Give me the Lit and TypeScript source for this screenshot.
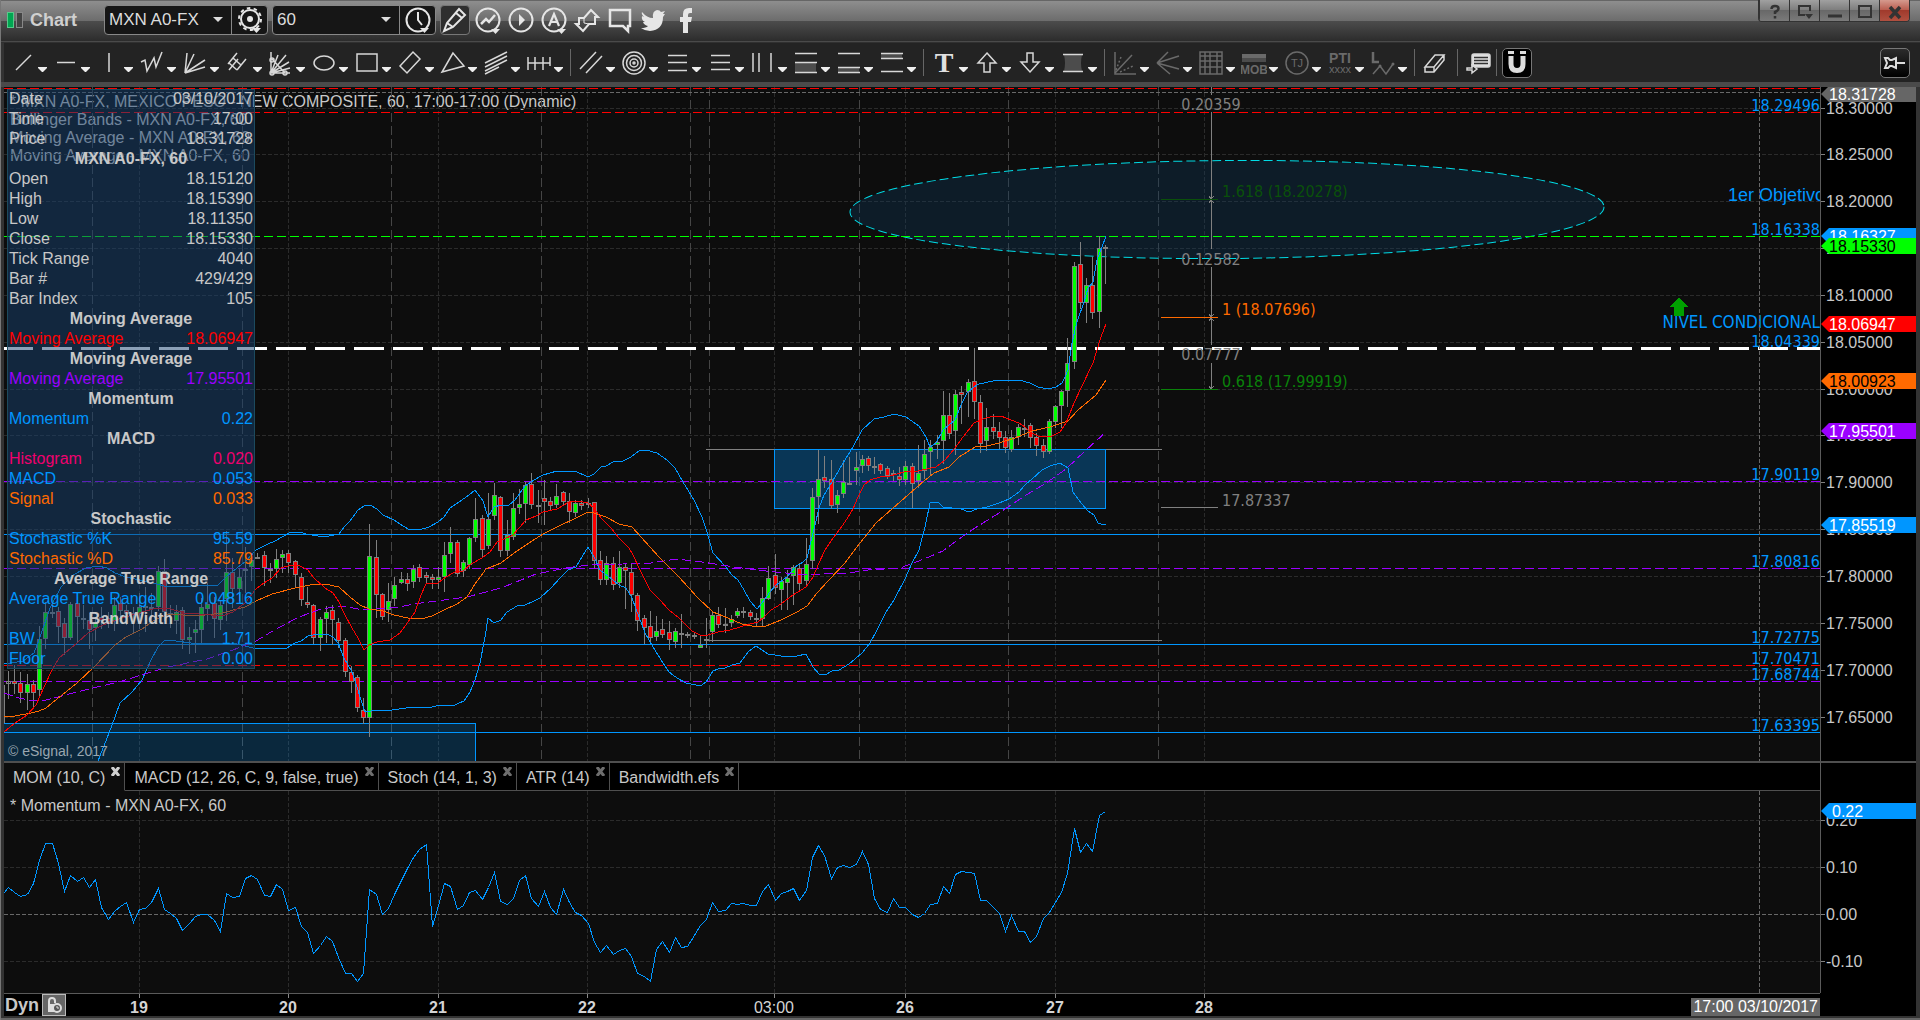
import { LitElement, html, svg, css } from "lit";
import { customElement, state } from "lit/decorators.js";
import { classMap } from "lit/directives/class-map.js";
import { styleMap } from "lit/directives/style-map.js";

type Pt = [number, number];

/* Drawing units: one pixel; the price pane starts at PANE_X / PANE_Y, the study pane at STUDY_Y. */
const PANE_X = 4;
const PANE_Y = 87;
const STUDY_Y = 791;
const BAR_X = 8;
const BAR_STEP = 6.232;

const barX = (i: number) => Math.round(BAR_X + i * BAR_STEP);
const priceY = (p: number) => Math.floor(21 + (18.3 - p) * 937) + 0.5;

/* high, body top, body bottom, low, g = up / r = down / d = unchanged */
const BARS = `
671 681 683 698 d|665 681 683 693 r|672 683 692 702 r|674 684 692 709 g|680 684 692 706 r|626 639 689 696 g|602 612 638 648 g|603 612 612 617 d
607 611 626 642 r|618 623 637 654 r|602 604 637 639 g|597 603 616 641 r|605 618 618 628 d|613 620 629 648 r|617 622 627 640 g|607 617 620 628 r
612 618 621 627 r|597 605 620 630 g|597 603 610 620 r|605 610 613 624 r|607 613 613 633 d|593 607 613 628 g|587 606 606 631 d|593 607 607 620 d
566 571 606 610 g|559 571 611 620 r|605 613 613 627 d|605 612 620 633 g|607 610 639 648 r|627 637 639 653 g|620 629 632 652 g|598 607 629 643 g
583 604 608 620 g|597 603 618 637 r|600 605 619 629 g|531 572 598 620 g|558 572 588 607 r|568 577 588 600 g|547 569 569 592 d|553 560 566 580 g
553 557 557 558 d|551 555 567 585 r|563 569 569 582 d|549 559 568 577 g|550 554 557 572 g|550 553 562 572 r|560 561 574 587 r|573 577 599 605 r
587 602 604 607 r|604 605 637 643 r|617 619 637 650 g|606 612 618 642 g|605 610 619 644 r|618 622 640 647 r|638 640 671 676 r|666 672 681 692 r
675 677 707 711 r|698 710 717 723 r|524 556 717 736 g|540 557 594 617 r|593 594 616 619 r|583 601 609 621 g|577 585 598 605 g|572 579 582 583 g
573 579 583 590 r|565 569 581 587 g|564 567 577 581 r|572 575 577 582 r|574 577 579 588 r|567 577 579 588 g|542 555 576 591 g|527 542 553 562 g
540 542 573 576 r|560 562 570 576 g|537 538 564 568 g|498 519 537 541 g|515 518 549 557 r|493 519 545 548 g|483 495 515 519 g|496 497 550 556 r
520 535 550 555 g|493 508 536 539 g|489 504 507 513 g|482 485 503 522 g|473 484 504 508 r|490 505 505 522 d|480 498 501 524 r|497 501 505 509 r
484 496 504 507 g|491 492 501 504 r|493 501 511 522 r|500 503 512 516 g|500 503 505 509 r|498 503 503 507 d|502 502 560 567 r|551 560 579 584 r
556 563 579 584 g|557 563 584 589 r|551 567 582 587 g|563 567 570 608 r|563 572 594 611 r|593 595 620 630 r|615 618 627 643 r|611 626 637 641 r
616 631 636 640 g|619 629 634 637 r|621 632 639 649 r|628 631 641 647 g|614 633 633 647 d|632 634 634 637 d|632 635 635 638 d|635 645 647 647 g
618 639 639 647 d|612 615 631 641 g|607 615 624 627 r|608 624 624 632 d|615 619 622 626 g|608 611 615 617 g|607 611 611 617 d|610 612 616 619 r
613 618 618 626 d|587 598 618 625 g|566 578 598 599 g|554 575 587 593 r|577 581 589 609 g|570 578 582 609 g|565 567 575 604 g|563 568 583 591 r
538 564 580 584 g|488 497 560 568 g|450 479 496 523 g|456 477 480 487 r|460 479 505 508 r|490 495 504 512 g|460 482 493 497 g|457 483 483 484 d
452 467 470 484 g|455 459 465 472 g|456 458 465 470 r|457 466 466 473 d|463 464 470 473 r|466 468 475 478 r|470 473 473 480 d|467 476 479 485 r
461 466 479 484 g|463 466 483 507 r|445 473 480 487 g|440 454 470 478 g|440 447 451 474 g|435 442 444 458 g|391 415 440 463 g|393 415 433 438 r
390 394 430 454 g|386 392 394 423 r|379 382 391 416 g|348 381 401 418 r|395 402 443 452 r|408 427 440 450 g|414 427 431 438 r|422 431 437 448 r
431 437 447 452 r|430 437 449 451 g|424 427 436 444 g|419 428 428 436 d|423 425 437 447 r|433 437 445 455 r|439 445 451 457 r|419 421 451 453 g
405 406 421 427 g|390 391 405 427 g|338 363 390 406 g|262 266 361 368 g|242 264 302 308 r|278 285 302 322 g|257 285 312 318 r|236 248 311 327 g|245 247 247 283 d`
  .trim()
  .split(/[|\n]/)
  .map((s) => s.trim().split(" "));

const BAND_UPPER = "4,664 23,661 34,653 39,640 50,608 61,587 73,575 86,568 98,566 107,568 115,573 126,577 153,583 168,587 191,586 218,585 226,577 237,568 245,562 256,550 268,544 275,541 289,533 300,532 306,534 318,536 329,536 339,534 344,527 350,521 358,510 364,506 370,505 377,509 383,515 394,520 400,524 408,529 419,530 429,527 438,522 444,517 450,508 459,502 469,495 475,490 483,501 488,517 494,507 501,505 509,505 515,500 525,486 534,480 543,475 557,471 575,471 588,477 594,474 601,467 606,466 613,462 623,461 631,457 639,451 646,450 657,453 667,460 675,468 683,482 694,500 702,517 707,532 713,553 726,567 732,575 738,580 744,590 750,601 757,609 762,603 770,592 775,586 787,577 795,567 803,562 807,558 812,537 815,525 819,508 824,495 829,487 835,477 843,463 853,447 862,430 874,419 884,417 894,414 906,417 919,426 926,437 930,447 936,443 943,430 955,420 961,405 967,393 974,387 979,384 993,381 1019,380 1030,383 1038,387 1048,389 1056,387 1062,383 1065,377 1068,370 1072,343 1077,322 1084,302 1088,288 1093,282 1097,260 1102,247 1106,236";
const BAND_LOWER = "98,761 109,733 115,717 120,703 132,692 142,680 151,660 158,647 165,640 176,641 191,643 220,643 237,644 253,648 276,648 287,648 295,643 301,641 308,636 318,634 327,634 333,637 338,643 344,658 352,672 357,687 362,703 365,712 377,710 392,710 413,707 432,707 440,705 453,706 459,703 464,701 470,692 475,680 480,663 485,637 488,618 494,623 501,620 507,612 517,606 525,605 534,601 540,598 551,588 560,578 568,570 576,567 582,557 588,547 594,557 600,570 613,580 619,585 626,588 632,598 639,617 645,633 653,647 663,663 669,672 677,678 686,683 696,685 702,685 706,682 713,671 718,669 725,668 732,665 740,663 749,651 756,646 762,650 768,654 775,655 781,656 797,656 806,654 813,667 819,674 825,675 832,671 839,670 849,664 862,653 870,643 876,632 886,612 894,600 905,579 912,563 919,550 925,527 930,503 938,502 943,507 961,509 969,512 977,509 987,507 999,503 1009,499 1019,492 1025,485 1032,479 1042,470 1050,466 1060,463 1068,468 1073,492 1081,503 1088,511 1094,515 1098,523 1101,524 1106,524";
const MA_FAST = "4,732 15,723 27,715 36,705 44,687 52,670 59,658 77,643 88,633 103,625 122,618 142,612 157,608 168,608 184,613 199,614 222,616 233,612 245,603 256,589 264,583 272,578 281,568 291,565 300,566 308,570 314,578 325,588 333,593 339,602 344,613 352,628 358,638 364,650 369,645 377,642 390,640 400,633 408,622 415,612 421,595 426,584 438,583 446,577 455,572 463,571 471,564 482,558 490,552 497,542 513,535 519,528 526,520 536,516 543,512 557,509 569,502 578,501 588,503 594,508 601,518 611,528 619,538 629,548 633,555 641,572 650,590 659,599 669,610 679,618 692,631 700,635 708,635 718,632 730,630 740,627 750,624 758,622 764,617 771,610 781,604 793,595 806,587 813,577 819,563 825,550 831,541 845,522 853,509 858,497 864,485 870,480 880,477 890,476 904,472 918,471 936,467 945,460 955,448 963,437 974,423 983,419 993,416 1001,416 1011,420 1019,423 1025,427 1030,432 1038,436 1050,437 1060,432 1066,423 1070,413 1074,403 1081,388 1093,363 1101,337 1106,324";
const MA_SLOW = "4,716 15,716 31,713 39,711 46,708 57,699 77,683 94,667 115,645 126,637 142,629 153,621 168,614 197,616 222,613 245,607 256,601 272,594 295,588 310,585 325,584 339,587 350,597 360,605 369,609 383,611 394,615 408,618 421,619 432,616 444,610 457,604 467,597 475,584 486,569 501,563 517,551 532,541 543,534 559,526 574,519 588,512 594,513 606,517 619,524 632,527 641,537 659,557 679,577 698,598 713,612 728,618 742,624 757,627 766,626 781,620 797,612 807,606 817,593 829,580 845,563 860,543 876,523 892,509 908,495 924,481 934,473 949,467 959,457 975,447 987,446 999,443 1015,438 1032,431 1050,427 1068,421 1078,410 1096,395 1106,380";
const MA_LONG = "4,693 19,698 34,701 46,700 77,692 122,681 168,667 207,659 233,650 256,641 276,629 299,617 321,609 341,606 364,610 398,607 421,603 467,597 501,588 536,574 566,568 588,565 623,564 651,563 677,559 702,562 734,567 766,571 805,575 821,574 849,573 868,570 900,568 924,559 943,551 959,539 975,528 999,513 1023,497 1046,483 1066,469 1086,450 1106,432";

const MOMENTUM = [
  887, 892, 896, 894, 883, 860, 843, 843, 863, 891, 875, 881, 877, 887, 879, 907, 919, 911, 906, 902, 922, 909, 908, 902, 888, 909, 913, 918, 930, 923,
  916, 914, 914, 920, 931, 893, 897, 896, 878, 875, 879, 895, 896, 884, 889, 910, 907, 926, 932, 953, 945, 936, 941, 957, 973, 973, 981, 973, 889, 894,
  914, 908, 894, 880, 868, 857, 849, 844, 926, 905, 883, 886, 909, 905, 892, 890, 899, 887, 872, 901, 904, 898, 880, 875, 898, 906, 891, 907, 914, 889,
  902, 912, 915, 923, 942, 952, 945, 954, 950, 948, 956, 973, 976, 981, 949, 941, 952, 937, 947, 946, 935, 925, 919, 902, 911, 910, 903, 904, 903, 905,
  905, 891, 884, 900, 893, 891, 888, 900, 890, 857, 845, 855, 878, 867, 865, 867, 864, 851, 864, 898, 909, 912, 898, 907, 907, 914, 917, 913, 904, 903,
  886, 893, 874, 871, 872, 873, 900, 900, 907, 913, 931, 915, 931, 931, 942, 936, 918, 912, 902, 892, 873, 828, 852, 843, 851, 815, 811,
];

const GRID_X = [139, 288, 438, 587, 774, 905, 1055, 1204];
const SESSION_X = [92, 242, 391, 541, 690, 709, 859, 1008, 1158];
const PRICES = [18.3, 18.25, 18.2, 18.15, 18.1, 18.05, 18, 17.95, 17.9, 17.85, 17.8, 17.75, 17.7, 17.65];

const LEVELS: { price: number; cls: string; label: boolean }[] = [
  { price: 18.3213, cls: "red", label: false },
  { price: 18.29496, cls: "red", label: true },
  { price: 18.16338, cls: "lime", label: true },
  { price: 18.04339, cls: "bold", label: true },
  { price: 17.90119, cls: "violet", label: true },
  { price: 17.8453, cls: "solid", label: false },
  { price: 17.80816, cls: "violet", label: true },
  { price: 17.72775, cls: "solid", label: true },
  { price: 17.70471, cls: "red", label: true },
  { price: 17.68744, cls: "violet", label: true },
  { price: 17.63395, cls: "solid", label: true },
];

const FLAGS: [number, string, string, string][] = [
  [7, "18.31728", "#666666", "#ffffff"],
  [149, "18.16327", "#0096ff", "#ffffff"],
  [159, "18.15330", "#00ff00", "#000000"],
  [237, "18.06947", "#ff0000", "#ffffff"],
  [294, "18.00923", "#ff6a00", "#000000"],
  [344, "17.95501", "#9b00ff", "#ffffff"],
  [438, "17.85519", "#0096ff", "#ffffff"],
];

const CURSOR_ROWS: [string, string?, string?][] = [
  ["Date", "03/10/2017"], ["Time", "17:00"], ["Price", "18.31728"],
  ["MXN A0-FX, 60"],
  ["Open", "18.15120"], ["High", "18.15390"], ["Low", "18.11350"], ["Close", "18.15330"],
  ["Tick Range", "4040"], ["Bar #", "429/429"], ["Bar Index", "105"],
  ["Moving Average"], ["Moving Average", "18.06947", "red"],
  ["Moving Average"], ["Moving Average", "17.95501", "violet"],
  ["Momentum"], ["Momentum", "0.22", "blue"],
  ["MACD"], ["Histogram", "0.020", "pink"], ["MACD", "0.053", "blue"], ["Signal", "0.033", "orange"],
  ["Stochastic"], ["Stochastic %K", "95.59", "blue"], ["Stochastic %D", "85.79", "orange"],
  ["Average True Range"], ["Average True Range", "0.04816", "blue"],
  ["BandWidth"], ["BW", "1.71", "blue"], ["Floor", "0.00", "blue"],
];

const STUDIES = ["MOM (10, C)", "MACD (12, 26, C, 9, false, true)", "Stoch (14, 1, 3)", "ATR (14)", "Bandwidth.efs"];

/* Drawing tools: label, glyph in a 26 × 26 box, dimmed when unavailable. */
type Tool = { name: string; art: unknown; dim?: boolean };
const TOOLS: Tool[][] = [
  [
    { name: "Trend line", art: svg`<path d="M6 20 L21 5"/>` },
    { name: "Horizontal line", art: svg`<path d="M4 12.500H22"/>` },
    { name: "Vertical line", art: svg`<path d="M13 3V22"/>` },
    { name: "Free line", art: svg`<path d="M2 12L6 10L8 21L15 8L17 17L23 2"/>` },
    { name: "Gann fan", art: svg`<path d="M3 23L5 3M3 23L12 4M3 23L23 10M3 23L23 17"/>` },
    { name: "Pitchfork", art: svg`<path d="M4 20L13 9M3 14L12 3M12 20L21 9M4 13L12 20M8 8L16 15"/>` },
    { name: "Speed lines", art: svg`<path d="M3 2V23H22M3 23L10 5M3 23L18 5M3 23L21 12M3 23L22 18M4 9L17 23"/><circle cx="4" cy="10" r="2"/><circle cx="4" cy="23" r="2"/><circle cx="17" cy="23" r="2"/>` },
    { name: "Ellipse", art: svg`<ellipse cx="13" cy="13" rx="10" ry="7"/>` },
    { name: "Rectangle", art: svg`<rect x="3" y="4" width="20" height="17"/>` },
    { name: "Parallelogram", art: svg`<path d="M3 16L16 2L23 9L10 23Z"/>` },
    { name: "Triangle", art: svg`<path d="M13 3L2 22L24 16Z"/>` },
    { name: "Regression", art: svg`<path d="M2 13L24 2M2 17L24 6M2 21L24 10M2 24L16 17"/>` },
    { name: "Cycle lines", art: svg`<path d="M2 13H24M2 7V20M9 7V20M17 7V20M24 7V16"/>` },
  ],
  [
    { name: "Channel", art: svg`<path d="M2 19L18 2M8 23L24 6"/>` },
    { name: "Fibonacci circle", art: svg`<circle cx="13" cy="13" r="11"/><circle cx="13" cy="13" r="7.500"/><circle cx="13" cy="13" r="4"/><circle cx="13" cy="13" r="1"/>` },
    { name: "Fibonacci retracement", art: svg`<path d="M4 5.500H23M4 12.500H23M4 20.500H23"/>` },
    { name: "Fibonacci extension", art: svg`<path d="M4 5.500H23M4 12.500H23M4 19.500H23"/>` },
    { name: "Fibonacci time", art: svg`<path d="M3 3V22M9 3V22M21 3V22"/>` },
    { name: "Fibonacci zone A", art: svg`<rect x="2" y="13" width="21" height="9" class="wash"/><path d="M2 3.500H24M2 12.500H24M2 22.500H24"/>` },
    { name: "Fibonacci zone B", art: svg`<rect x="2" y="17" width="21" height="5" class="wash"/><path d="M2 3.500H24M2 17.500H24M2 22.500H24"/>` },
    { name: "Fibonacci zone C", art: svg`<rect x="2" y="3" width="21" height="5" class="wash"/><path d="M2 3.500H24M2 8.500H24M2 21.500H24"/>` },
  ],
  [
    { name: "Text", art: svg`<text x="13" y="22" class="serif">T</text>` },
    { name: "Arrow up", art: svg`<path d="M13 3L22 13H16V22H10V13H4Z"/>` },
    { name: "Arrow down", art: svg`<path d="M13 22L22 12H16V3H10V12H4Z"/>` },
    { name: "Highlight", art: svg`<path class="wash" d="M4 5H22Q20 13 22 21H4Q6 13 4 5"/><path d="M3 4.500H23M3 21.500H23"/>` },
  ],
  [
    { name: "Gann angles", dim: true, art: svg`<path d="M3 2V24H24"/><path d="M3 23L20 5"/><path stroke-dasharray="2 2" d="M4 20L9 7M8 22L21 16"/>` },
    { name: "Andrews fan", dim: true, art: svg`<path d="M2 13L13 2M2 13L24 6M2 13L24 19M2 13L15 24"/>` },
    { name: "Grid", dim: true, art: svg`<rect x="2" y="2" width="22" height="22"/><path d="M7 2V24M12 2V24M19 2V24M2 6H24M2 11H24M2 17H24"/>` },
    { name: "Make or break", dim: true, art: svg`<rect x="1" y="4" width="24" height="4" class="fill"/><rect x="1" y="8" width="24" height="4" class="wash"/><text x="13" y="24" class="strong">MOB</text>` },
    { name: "Trade judge", dim: true, art: svg`<circle cx="13" cy="13" r="11"/><text x="13" y="17">TJ</text>` },
    { name: "Profit taking index", dim: true, art: svg`<text x="13" y="13" class="tall">PTI</text><text x="13" y="23">xxxx</text>` },
    { name: "Elliott labels", dim: true, art: svg`<path d="M3 2V12H9" stroke-width="2.500"/><path d="M3 24L10 16L16 24L23 14"/><circle cx="10" cy="16" r="1.500"/><circle cx="23" cy="14" r="1.500"/>` },
  ],
];

const QUICK = [
  { name: "Studies", art: svg`<circle cx="14" cy="14" r="11.500"/><path d="M7 18L12 13L15 16L21 9" stroke-width="2.500"/><path class="fill" d="M17 23h9l-4.500 5z"/>` },
  { name: "Replay", art: svg`<circle cx="14" cy="14" r="11.500"/><path class="fill" d="M12 8L18 14L12 20Z"/>` },
  { name: "Alerts", art: svg`<circle cx="14" cy="14" r="11.500"/><path d="M9 20L14 8L19 20M11 16H17" stroke-width="2.200"/><path class="fill" d="M17 23h9l-4.500 5z"/>` },
  { name: "Trade", art: svg`<path d="M18 4L25 11H22V18H16L10 25L3 18H6V12H11Z" /><path d="M11 12V17L16 18" stroke-width="1"/>` },
  { name: "Comments", art: svg`<path d="M4 4H24V20H22V25L17 20H4Z" stroke-width="2.500"/>` },
  { name: "Twitter", art: svg`<path class="fill" d="M3 6Q8 12 14 12Q13 5 18 4Q21 4 22 6L26 5L24 8L26 8L24 11Q24 24 11 25Q6 25 2 22Q7 22 9 20Q5 19 4 16L6 16Q2 14 3 10L5 11Q2 8 3 6"/>` },
  { name: "Facebook", art: svg`<path class="fill" d="M11 27V16H8V11H11V8Q11 2 17 2H20V7H18Q16 7 16 9V11H20L19 16H16V27Z"/>` },
];

@customElement("app-root")
export class AppRoot extends LitElement {
  @state() private study = 0;
  @state() private magnet = true;

  static styles = css`
    :host { display: block; font: 16px/20px "Liberation Sans", Arial, sans-serif; color: #c8c8c8; }
    * { box-sizing: border-box; }
    button, select { font: inherit; color: inherit; background: none; border: 0; padding: 0; margin: 0; }
    svg { display: block; }
    .frame { min-height: 100vh; display: flex; flex-direction: column; background: #333; border-left: 1px solid #777; }
    .title { height: 43px; flex: none; display: flex; align-items: flex-start; justify-content: space-between;
      background: linear-gradient(#666 0 1px, #8e8e8e 1px, #6c6c6c 21px, #4c4c4c 21px, #2c2c2c 41px, #4a4a4a 41px 42px, #303030 42px); }
    .bar { display: flex; align-items: center; padding: 5px 0 0 6px; }
    .logo { display: flex; gap: 2px; }
    .logo i { width: 7px; height: 16px; border: 1px solid #888; background: #444; }
    .logo i.up { background: #00a651; border-color: #58c98a; }
    h1 { font-size: 18px; line-height: 30px; margin: 0 27px 0 7px; color: #d0d0d0; }
    .combo { display: flex; align-items: center; height: 30px; background: #161616; border: 1px solid #888; border-radius: 4px; margin-right: 4px; }
    .pick { position: relative; display: flex; align-items: center; height: 28px; }
    .pick select { appearance: none; width: 126px; height: 28px; padding: 0 4px; font-size: 17px; color: #dcdcdc; outline: none; }
    .pick::after { content: ""; position: absolute; right: 8px; top: 11px; border: 5px solid transparent; border-top-color: #ddd; pointer-events: none; }
    .combo > button { width: 36px; height: 28px; border-left: 1px solid #888; display: flex; align-items: center; justify-content: center; }
    .art { fill: none; stroke: #e6e6e6; stroke-width: 2; }
    .art .fill { fill: #e6e6e6; stroke: none; }
    .pencil { width: 30px; height: 30px; background: #2e2e2e; border: 1px solid #777; border-radius: 4px; }
    .quick { display: flex; gap: 5px; margin-left: 4px; }
    .quick button { width: 28px; height: 28px; }
    .window { display: flex; margin-right: 10px; border: 1px solid #333; border-top: 0; border-radius: 0 0 4px 4px; overflow: hidden; }
    .window button { width: 30px; height: 21px; border-left: 1px solid #333; background: linear-gradient(#a0a0a0, #7c7c7c 50%, #686868 50%, #7a7a7a); }
    .window button:last-child { background: linear-gradient(#d59a8e, #b8594b 50%, #a03a2c 50%, #b05040); }
    .window svg { margin: 0 auto; fill: none; stroke: #333; stroke-width: 2; }
    .tools { height: 39px; flex: none; display: flex; align-items: center; background: #232323; padding: 0 10px 0 4px; margin: 0 0 0 3px; }
    .tool { width: 43px; height: 32px; display: flex; align-items: center; }
    .tool svg { flex: none; }
    .glyph { fill: none; stroke: #d8d8d8; stroke-width: 1.5; margin: 0 2px; }
    .glyph .wash { fill: #4c4c4c; stroke: none; }
    .glyph text { fill: #e0e0e0; stroke: none; font-size: 11px; text-anchor: middle; }
    .glyph text.serif { font: bold 28px "Liberation Serif", serif; }
    .glyph text.strong { font-size: 12px; font-weight: bold; }
    .glyph text.tall { font-size: 14px; font-weight: bold; }
    .dim .glyph { stroke: #6a6a6a; }
    .dim .glyph text, .dim .glyph .fill, .dim .glyph circle[r="1.500"] { fill: #6a6a6a; stroke: none; }
    .caret { fill: #eee; margin-top: 14px; }
    .rule { width: 1px; height: 27px; background: #666; margin: 0 5px 0 3px; }
    .lone { width: 34px; height: 30px; }
    .mid { width: 30px; height: 30px; }
    .boxed { width: 30px; height: 30px; background: #000; border: 1px solid #777; border-radius: 5px; }
    .push { margin-left: auto; background: linear-gradient(#2c2c2c, #000); }
    .strip { height: 5px; flex: none; background: #4a4a4a; }
    .work { flex: 1; display: grid; grid-template-columns: minmax(0, 1fr) 96px; grid-template-rows: minmax(400px, 1fr) 30px 202px 23px;
      margin: 0 4px 0 3px; background: #000; }
    .pane { position: relative; background: #0d0d0d; overflow: hidden; }
    .pane > svg, .axis > svg { position: absolute; inset: 0; width: 100%; height: 100%; }
    .axis { position: relative; border-left: 1px solid #5a5a5a; overflow: hidden; }
    .chart { shape-rendering: crispEdges; fill: none; }
    .chart text, .axis text { stroke: none; fill: #c8c8c8; }
    .chart .tah { font: 16px/18px "DejaVu Sans Condensed", "DejaVu Sans", sans-serif; }
    .chart .lv { fill: #0096ff; text-anchor: end; }
    .chart .note { fill: #0096ff; font-size: 18px; }
    .chart .tah.note { font-size: 17px; }
    .grid { stroke: #2b2b2b; stroke-dasharray: 4 2; }
    .session { stroke: #454545; stroke-dasharray: 9 4; }
    .cross { stroke: #686868; stroke-dasharray: 4 2; }
    .level { stroke: #0096ff; }
    .level.red { stroke: #f00; stroke-dasharray: 9 4; }
    .level.lime { stroke: #0f0; stroke-dasharray: 9 4; }
    .level.violet { stroke: #9b00ff; stroke-dasharray: 9 4; }
    .level.bold { stroke: #fff; stroke-width: 3; stroke-dasharray: 30 9; stroke-dashoffset: 1; }
    .zone { fill: #0096ff; fill-opacity: .3; stroke: #0096ff; }
    .zone.soft { fill-opacity: .2; }
    .band { stroke: #0096ff; }
    .fast { stroke: #f00; }
    .slow { stroke: #ff6a00; }
    .long { stroke: #9b00ff; stroke-dasharray: 9 4; }
    .wick { stroke: #808080; }
    .body { stroke: #808080; }
    .body.g { fill: #0f0; }
    .body.r { fill: #f00; }
    .oval { fill: #0f3a5c; fill-opacity: .35; stroke: #00dce6; stroke-dasharray: 9 4; shape-rendering: auto; }
    .gray { stroke: #808080; }
    .chart text.mute { fill: #808080; text-anchor: middle; }
    .legend { position: absolute; left: 6px; top: 6px; margin: 0; padding: 0; list-style: none; line-height: 18px; white-space: nowrap; }
    .credit { position: absolute; left: 4px; bottom: 0; font-size: 14px; color: #9aa7b0; margin: 0; }
    .cursor { position: absolute; left: 3px; top: 2px; width: 248px; border-collapse: collapse; background: rgba(24, 66, 112, .5); box-shadow: inset 0 0 0 1px #1c4a5e; }
    .cursor th, .cursor td { height: 20px; padding: 0 2px; line-height: 20px; text-align: left; font-weight: normal; white-space: nowrap; }
    .cursor td { text-align: right; }
    .cursor .head th { font-weight: bold; text-align: center; }
    .cursor .red { color: #f00; }
    .cursor .violet { color: #9b00ff; }
    .cursor .blue { color: #0096ff; }
    .cursor .pink { color: #f0006e; }
    .cursor .orange { color: #ff6a00; }
    .tabs { display: flex; border-top: 2px solid #4f4f4f; }
    .tab { display: flex; align-items: center; gap: 6px; padding: 0 4px 0 9px; border: solid #4f4f4f; border-width: 0 1px 1px 0; white-space: nowrap; }
    .tab button { padding-top: 2px; }
    .tab.on { background: #0d0d0d; border-bottom-color: #0d0d0d; }
    .tab .x { align-self: flex-start; width: 9px; height: 11px; margin-top: 2px; }
    .tab .x svg { stroke: #6e6e6e; stroke-width: 3; }
    .tab.on .x svg { stroke: #d0d0d0; }
    .rest { flex: 1; border-bottom: 1px solid #4f4f4f; }
    .gap { border-top: 2px solid #4f4f4f; border-left: 1px solid #5a5a5a; }
    .time { position: relative; display: flex; align-items: center; border-top: 1px solid #5a5a5a; }
    .time svg.scale { position: absolute; inset: 0; width: 100%; height: 100%; fill: #d4d4d4; text-anchor: middle; }
    .dyn { font-size: 18px; font-weight: bold; padding: 0 3px 0 1px; }
    .lock { width: 24px; height: 22px; background: #666; border: 1px solid #bbb; }
    .stamp { position: relative; margin: 4px 0 0 auto; padding: 0 2px; line-height: 18px; background: #666; color: #fff; }
    .foot { height: 4px; flex: none; border-bottom: 2px solid #666; }
  `;

  private hline(y: number, cls: string) {
    return svg`<line class=${cls} x1="0" x2="100%" y1=${y} y2=${y}></line>`;
  }

  private vline(x: number, cls: string, y1 = "0", y2 = "100%") {
    return svg`<line class=${cls} x1=${x + 0.5 - PANE_X} x2=${x + 0.5 - PANE_X} y1=${y1} y2=${y2}></line>`;
  }

  private candle(bar: string[], i: number) {
    const [h, t, b, l] = bar.map(Number);
    const x = barX(i);
    return svg`<line class="wick" x1=${x + 0.5} x2=${x + 0.5} y1=${h} y2=${l + 1}></line>
      <rect class="body ${bar[4]}" x=${x - 1.5} y=${t + 0.5} width="4" height=${Math.max(b - t, 1)}></rect>`;
  }

  private fib(y: number, color: string, text: string) {
    return svg`<line x1="1161" x2="1218" y1=${y + 0.5} y2=${y + 0.5} stroke=${color}></line>
      <text class="tah" x="1222" y=${y - 2} style=${styleMap({ fill: color })}>${text}</text>`;
  }

  private pricePane() {
    const spans: Pt[] = [[87, 95], [112, 249], [267, 345], [363, 389]];
    return svg`
      ${GRID_X.map((x) => this.vline(x, "grid"))}
      ${PRICES.map((p) => this.hline(priceY(p), "grid"))}
      ${SESSION_X.map((x) => this.vline(x, "session"))}
      <g transform="translate(${-PANE_X} ${-PANE_Y})">
        <rect class="zone soft" x="3.5" y="723.5" width="472" height="900"></rect>
        <rect class="zone" x="774.5" y="449.5" width="331" height="59"></rect>
        <ellipse class="oval" cx="1227" cy="209.5" rx="377" ry="49" transform="rotate(-0.4 1227 209.5)"></ellipse>
        <path class="gray" d="M706 449.500H774M1106 449.500H1162M706 640.500H1162M1161 507.500H1218M4.500 685V723"/>
      </g>
      ${LEVELS.map((l) => this.hline(priceY(l.price), "level " + l.cls))}
      <g transform="translate(${-PANE_X} ${-PANE_Y})">
        ${BARS.map((b, i) => this.candle(b, i))}
        <polyline class="band" points=${BAND_UPPER}></polyline>
        <polyline class="band" points=${BAND_LOWER}></polyline>
        <polyline class="long" points=${MA_LONG}></polyline>
        <polyline class="slow" points=${MA_SLOW}></polyline>
        <polyline class="fast" points=${MA_FAST}></polyline>
        ${spans.map(([a, b]) => svg`<line class="gray" x1="1211.5" x2="1211.5" y1=${a} y2=${b}></line>`)}
        <path class="gray" d="M1209 196L1211 199L1214 196M1209 203L1211 200L1214 203M1209 314L1211 317L1214 314M1209 321L1211 318L1214 321M1209 386L1211 389L1214 386"/>
        <text class="tah mute" x="1211" y="110">0.20359</text>
        <text class="tah mute" x="1211" y="265">0.12582</text>
        <text class="tah mute" x="1211" y="360">0.07777</text>
        ${this.fib(199, "#0a500a", "1.618 (18.20278)")}
        ${this.fib(317, "#ff6a00", "1 (18.07696)")}
        ${this.fib(389, "#0a820a", "0.618 (17.99919)")}
        <text class="tah" x="1222" y="506" style="fill:#808080">17.87337</text>
      </g>
      ${LEVELS.filter((l) => l.label).map((l) => svg`<text class="tah lv" x="100%" y=${priceY(l.price) - 1.5}>${l.price.toFixed(5)}</text>`)}
      <text class="tah lv note" x="100%" y="241">NIVEL CONDICIONAL</text>
      ${this.hline(5.5, "cross")}
      <svg x="100%" overflow="visible">
        <text class="note" x="-92" y="114">1er Objetivo</text>
        <path d="M-141 211L-151 220H-146V229H-136V220H-131Z" fill="#00a000"/>
        <line class="cross" x1="-60.5" x2="-60.5" y1="0" y2="2000"></line>
      </svg>`;
  }

  private studyPane() {
    const pts = MOMENTUM.map((y, i) => `${barX(i) + 0.5 - PANE_X},${y - STUDY_Y + 0.5}`).join(" ");
    return svg`
      ${GRID_X.map((x) => this.vline(x, "grid"))}
      ${[29.5, 76.5, 170.5].map((y) => this.hline(y, "grid"))}
      ${this.hline(123.5, "cross")}
      <polyline class="band" points=${"0,102 " + pts}></polyline>
      <svg x="100%" overflow="visible"><line class="cross" x1="-60.5" x2="-60.5" y1="0" y2="2000"></line></svg>`;
  }

  private flag(y: number, text: string, fill: string, ink: string, x = 8) {
    return svg`<path d="M0 ${y}L8 ${y - 8}V${y + 8}Z" fill=${fill}/>
      <rect x="8" y=${y - 8} width="100%" height="16" fill=${fill}></rect>
      <text x=${x} y=${y + 6} style=${styleMap({ fill: ink })}>${text}</text>`;
  }

  private axisLabel(y: number, text: string) {
    return svg`<line class="gray" x1="0" x2="4" y1=${y} y2=${y}></line><text x="5" y=${y + 5.5}>${text}</text>`;
  }

  render() {
    const caret = svg`<path d="M0 0H9V1L5 5H4L0 1Z"/>`;
    return html`
      <div class="frame">
        <header class="title">
          <div class="bar">
            <span class="logo"><i class="up"></i><i></i></span>
            <h1>Chart</h1>
            <div class="combo">
              <label class="pick"><select aria-label="Symbol"><option>MXN A0-FX</option></select></label>
              <button aria-label="Settings"><svg class="art" width="28" height="28">
                <circle cx="14" cy="13" r="9"/><circle cx="14" cy="13" r="11" stroke-dasharray="3.500 3.400"/><circle class="fill" cx="14" cy="13" r="3"/><path class="fill" d="M16 22h9l-4.500 5z"/></svg></button>
            </div>
            <div class="combo">
              <label class="pick"><select aria-label="Interval"><option>60</option></select></label>
              <button aria-label="Time template"><svg class="art" width="28" height="28"><circle cx="14" cy="14" r="11.500"/><path d="M14 6V14L18 19"/><path class="fill" d="M16 22h9l-4.500 5z"/></svg></button>
            </div>
            <button class="pencil" aria-label="Draw"><svg class="art" width="28" height="28"><path d="M3 25L6 17L18 3L24 9L12 21ZM15 7L21 12M6 17L12 21" /></svg></button>
            <div class="quick">${QUICK.map((q) => html`<button aria-label=${q.name}><svg class="art" width="28" height="28">${q.art}</svg></button>`)}</div>
          </div>
          <div class="window">
            <button aria-label="Help"><svg width="18" height="18"><path d="M5.500 7Q5.500 4 9 4Q12.500 4 12.500 6.500Q12.500 8.500 9 10V12M9 14V16.500" stroke-width="2.500"/></svg></button>
            <button aria-label="Detach"><svg width="18" height="18"><path d="M9 13H3V4H14V9"/><path d="M9 12H17L13 17Z" fill="#333" stroke="none"/></svg></button>
            <button aria-label="Minimize"><svg width="18" height="18"><path d="M2 14H16" stroke-width="3"/></svg></button>
            <button aria-label="Maximize"><svg width="18" height="18"><rect x="3" y="4" width="12" height="11"/></svg></button>
            <button aria-label="Close"><svg width="18" height="18"><path d="M4 5L14 16M14 5L4 16" stroke-width="3.500"/></svg></button>
          </div>
        </header>
        <nav class="tools" aria-label="Drawing tools">
          ${TOOLS.map((group) => html`${group.map((t) => html`
            <button class=${classMap({ tool: true, dim: !!t.dim })} aria-label=${t.name}>
              <svg class="glyph" width="26" height="26">${t.art}</svg><svg class="caret" width="9" height="5">${caret}</svg>
            </button>`)}<span class="rule"></span>`)}
          <button class="lone" aria-label="Erase"><svg class="glyph" width="26" height="26"><path d="M3 17L13 5H22L12 17ZM3 17V22H12L22 10V5M12 17V22"/></svg></button>
          <span class="rule"></span>
          <button class="mid" aria-label="Add note"><svg class="glyph" width="28" height="26"><rect x="7" y="4" width="18" height="13" rx="2" fill="#e0e0e0"/><path stroke="#333" d="M9 7.500H23M9 10.500H23M9 13.500H23"/><path d="M2 18H7V15L12 19L7 23V20H2Z" fill="#232323"/></svg></button>
          <span class="rule"></span>
          <button class="boxed" aria-label="Magnet" aria-pressed=${this.magnet} @click=${() => (this.magnet = !this.magnet)}>
            <svg width="28" height="28" fill="none" stroke="#ddd" stroke-width="5"><path d="M8 7V15Q8 21.500 14 21.500Q20 21.500 20 15V7"/><path d="M5 3.500H11M17 3.500H23" stroke-width="3"/></svg></button>
          <button class="boxed push" aria-label="Pin toolbar"><svg width="28" height="28" fill="none" stroke="#ddd" stroke-width="2"><path d="M4 9H7L9 11H11L15 9V19L11 17H9L7 19H4L6 14ZM15 14H24"/></svg></button>
        </nav>
        <div class="strip"></div>
        <main class="work">
          <section class="pane" aria-label="Price chart">
            <ul class="legend">
              <li>* MXN A0-FX, MEXICO PESO - NEW COMPOSITE, 60, 17:00-17:00 (Dynamic)</li>
              <li>Bollinger Bands - MXN A0-FX, 60</li>
              <li>Moving Average - MXN A0-FX, 60</li>
              <li>Moving Average - MXN A0-FX, 60</li>
            </ul>
            <svg class="chart">${this.pricePane()}</svg>
            <p class="credit">© eSignal, 2017</p>
            <table class="cursor">
              ${CURSOR_ROWS.map(([k, v, c]) => v === undefined
                ? html`<tr class="head"><th colspan="2">${k}</th></tr>`
                : html`<tr class=${c ?? ""}><th>${k}</th><td>${v}</td></tr>`)}
            </table>
          </section>
          <aside class="axis"><svg>
            ${PRICES.map((p) => this.axisLabel(priceY(p), p.toFixed(5)))}
            ${FLAGS.map(([y, t, f, i]) => this.flag(y, t, f, i))}
          </svg></aside>
          <div class="tabs">
            ${STUDIES.map((s, i) => html`<div class=${classMap({ tab: true, on: i === this.study })}>
              <button @click=${() => (this.study = i)}>${s}</button>
              <button class="x" aria-label="Close ${s}"><svg width="9" height="9"><path d="M1 0L8 9M8 0L1 9"/></svg></button>
            </div>`)}
            <span class="rest"></span>
          </div>
          <div class="gap"></div>
          <section class="pane" aria-label="Momentum">
            <ul class="legend"><li>* Momentum - MXN A0-FX, 60</li></ul>
            <svg class="chart">${this.studyPane()}</svg>
          </section>
          <aside class="axis"><svg>
            ${[[29.5, "0.20"], [76.5, "0.10"], [123.5, "0.00"], [170.5, "-0.10"]].map(([y, t]) => this.axisLabel(y as number, t as string))}
            ${this.flag(20, "0.22", "#0096ff", "#ffffff", 11)}
          </svg></aside>
          <footer class="time">
            <svg class="scale">
              ${["19", "20", "21", "22", "03:00", "26", "27", "28"].map((t, i) => svg`
                <line x1=${GRID_X[i] - 3.5} x2=${GRID_X[i] - 3.5} y1="0" y2="4" stroke="#888"></line>
                <text x=${GRID_X[i] - 4} y="19" font-weight=${t.length > 2 ? "normal" : "bold"}>${t}</text>`)}
            </svg>
            <span class="dyn">Dyn</span>
            <button class="lock" aria-label="Lock time axis"><svg width="22" height="20" fill="none" stroke="#ddd" stroke-width="2"><path d="M6 9V6Q6 3 9 3Q12 3 12 6V8"/><path d="M5 9H12V17H5Z" fill="#ddd" stroke="none"/><circle cx="14" cy="13" r="4" fill="#555"/><path d="M14 11V13H16" stroke-width="1"/></svg></button>
            <span class="stamp">17:00 03/10/2017</span>
          </footer>
          <div></div>
        </main>
        <div class="foot"></div>
      </div>`;
  }
}
